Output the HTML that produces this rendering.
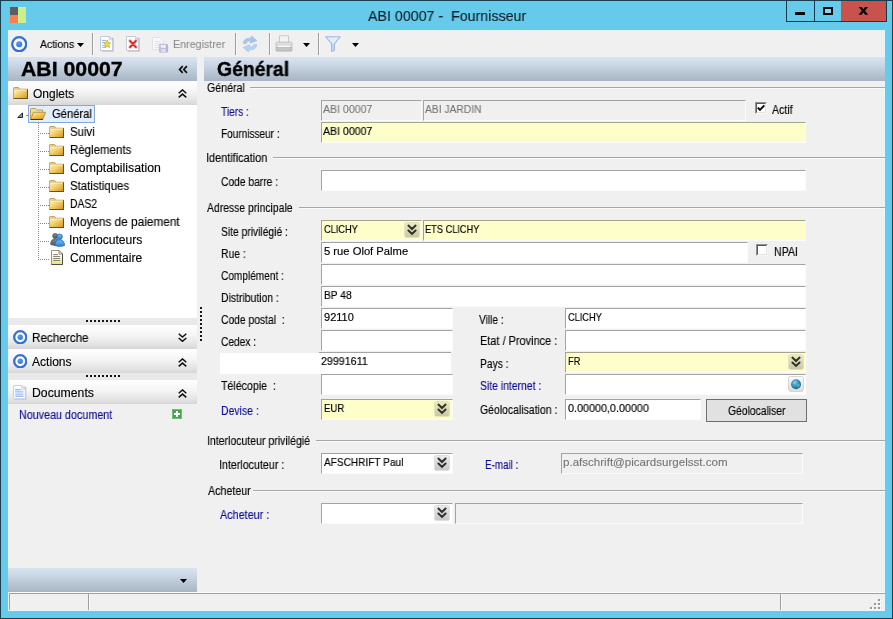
<!DOCTYPE html>
<html><head><meta charset="utf-8"><title>ABI 00007 - Fournisseur</title>
<style>
html,body{margin:0;padding:0;}
body{width:893px;height:619px;overflow:hidden;position:relative;background:#66caea;font-family:"Liberation Sans", sans-serif;}
#w div, #w svg, #w span{position:absolute;}
#w div{box-sizing:border-box;}
.t{white-space:pre;transform-origin:0 0;will-change:transform;}
.f{border-top:1px solid #a3a3a3;border-left:1px solid #a3a3a3;border-right:1px solid #fbfbfb;border-bottom:1px solid #fbfbfb;}
</style></head><body><div id="w">
<div style="left:0px;top:0px;width:893px;height:619px;background:#66caea;border:1px solid #1a3f50;"></div>
<div style="left:8px;top:31px;width:877px;height:580px;background:#f0f0f0;"></div>
<div style="left:884px;top:31px;width:1px;height:580px;background:#e6f6fb;"></div>
<div style="left:8px;top:610px;width:877px;height:1px;background:#e6f6fb;"></div>
<div style="left:8px;top:30px;width:877px;height:1px;background:#dff2f9;"></div>
<svg style="left:10px;top:7px" width="16" height="16" viewBox="0 0 16 16"><rect x="0" y="0" width="8" height="8" fill="#5f5d60"/><rect x="0" y="8" width="8" height="8" fill="#f5824e"/><rect x="8" y="0" width="8" height="16" fill="#c9f08a"/></svg>
<div style="left:786px;top:1px;width:101px;height:21px;border:1px solid #173a4a;border-top:none;background:#66caea;"></div>
<div style="left:814px;top:1px;width:1px;height:20px;background:#173a4a;"></div>
<div style="left:841px;top:1px;width:45px;height:20px;background:#c9524d;"></div>
<div style="left:795px;top:12px;width:10px;height:3px;background:#0a0a0a;"></div>
<div style="left:823px;top:7px;width:10px;height:8px;border:2px solid #0a0a0a;background:#8ed4ee;"></div>
<svg style="left:858px;top:7px" width="11" height="8" viewBox="0 0 11 8"><path d="M0.6 0H3.9L5.4 2.2L6.9 0H10.2L7 3.8L10.4 7.7H7.1L5.4 5.4L3.7 7.7H0.4L3.8 3.8Z" fill="#0a0a0a"/></svg>
<svg style="left:10.8px;top:35.5px" width="16.4" height="16.4" viewBox="0 0 16.4 16.4"><defs><radialGradient id="rg35" cx="0.4" cy="0.35" r="0.7"><stop offset="0" stop-color="#5a9cf0"/><stop offset="1" stop-color="#2f74d4"/></radialGradient></defs><circle cx="8.2" cy="8.2" r="7.00" fill="#f6f9fe" stroke="#3770c6" stroke-width="2.3"/><circle cx="8.2" cy="8.2" r="3.00" fill="url(#rg35)"/></svg>
<svg style="left:77px;top:43.3px" width="7" height="4" viewBox="0 0 7 4"><path d="M0 0H7L3.5 4Z" fill="#000"/></svg>
<div style="left:92px;top:33px;width:1px;height:22px;background:#9d9d9d;"></div>
<div style="left:93px;top:33px;width:1px;height:22px;background:#fafafa;"></div>
<div style="left:235px;top:33px;width:1px;height:22px;background:#9d9d9d;"></div>
<div style="left:236px;top:33px;width:1px;height:22px;background:#fafafa;"></div>
<div style="left:269px;top:33px;width:1px;height:22px;background:#9d9d9d;"></div>
<div style="left:270px;top:33px;width:1px;height:22px;background:#fafafa;"></div>
<div style="left:318px;top:33px;width:1px;height:22px;background:#9d9d9d;"></div>
<div style="left:319px;top:33px;width:1px;height:22px;background:#fafafa;"></div>
<svg style="left:100px;top:36px" width="14" height="16" viewBox="0 0 14 16"><path d="M2 2.2H13.6V15.6H2Z" fill="#7f8aa0" opacity="0.55"/><path d="M1.6 1.8H13V15H1.6Z" fill="#8d98ad" opacity="0.35"/><path d="M0.5 0.5H9.2L12.5 3.8V14.5H0.5Z" fill="#ffffff" stroke="#c3cbd9" stroke-width="1"/><path d="M9.2 0.5V3.8H12.5Z" fill="#e9edf4" stroke="#c3cbd9" stroke-width="0.8"/><path d="M2 4.5H6M2 6.6H5M2 9.2H5M2 11.3H6" stroke="#9fb4e0" stroke-width="1"/><path d="M7.2 3.9L8.3 6.6L10.7 6.9L8.9 8.7L9.4 11.6L7.2 10.2L5 11.6L5.5 8.7L3.7 6.9L6.1 6.6Z" fill="#ebe22c" stroke="#b4ad3c" stroke-width="0.7" stroke-linejoin="round"/></svg>
<svg style="left:126px;top:36px" width="14" height="16" viewBox="0 0 14 16"><path d="M2 2.2H13.6V15.6H2Z" fill="#7f8aa0" opacity="0.55"/><path d="M1.6 1.8H13V15H1.6Z" fill="#8d98ad" opacity="0.35"/><path d="M0.5 0.5H9.2L12.5 3.8V14.5H0.5Z" fill="#ffffff" stroke="#c3cbd9" stroke-width="1"/><path d="M9.2 0.5V3.8H12.5Z" fill="#e9edf4" stroke="#c3cbd9" stroke-width="0.8"/><path d="M3.9 4.8L10 11.2M10 4.8L3.9 11.2" stroke="#f4b0ac" stroke-width="3.2" stroke-linecap="round"/><path d="M4 4.9L9.9 11.1M9.9 4.9L4 11.1" stroke="#de2421" stroke-width="1.6" stroke-linecap="round"/></svg>
<svg style="left:152px;top:36px" width="17" height="17" viewBox="0 0 17 17"><path d="M0.5 1.5H8L11 4.5V13.5H0.5Z" fill="#f8f9fc" stroke="#dfe2ec"/><path d="M2.5 5.5H9M2.5 7.5H9M2.5 9.5H7M2.5 11.5H7" stroke="#dde2f0"/><rect x="7.3" y="8.3" width="8.4" height="8" rx="0.8" fill="#bfc0dc" stroke="#b4b5d4" stroke-width="0.6"/><rect x="8.8" y="9" width="5" height="2.8" fill="#eeeef7"/><rect x="9.2" y="13.2" width="4.6" height="3" fill="#dcdcee"/><path d="M15 9V16" stroke="#a7a8cc" stroke-width="1"/></svg>
<svg style="left:241px;top:35px" width="18" height="18" viewBox="0 0 18 18"><path d="M2.2 8.2C2.6 4.6 6.2 2.6 9.6 3.4L10.6 1L15.8 5.6L9 8.2L9.6 5.9C7.6 5.6 5.8 6.6 5.2 8.6Z" fill="#a9c6e8" stroke="#93b5de" stroke-width="0.6"/><path d="M15.8 9.8C15.4 13.4 11.8 15.4 8.4 14.6L7.4 17L2.2 12.4L9 9.8L8.4 12.1C10.4 12.4 12.2 11.4 12.8 9.4Z" fill="#b9d2ee" stroke="#9dbce2" stroke-width="0.6"/></svg>
<svg style="left:275px;top:35px" width="18" height="18" viewBox="0 0 18 18"><path d="M4.5 0.8H13.5V8H4.5Z" fill="#f4f4f4" stroke="#c9c9c9"/><path d="M1 8.5Q1 7 2.5 7H15.5Q17 7 17 8.5V13H1Z" fill="#dcdcdc" stroke="#bdbdbd" stroke-width="0.8"/><rect x="1" y="12.5" width="16" height="3.6" rx="1" fill="#c6c6c6" stroke="#adadad" stroke-width="0.8"/><rect x="3" y="10.6" width="12" height="1.6" fill="#f6f6f6"/></svg>
<svg style="left:303px;top:43px" width="7" height="4" viewBox="0 0 7 4"><path d="M0 0H7L3.5 4Z" fill="#000"/></svg>
<svg style="left:325px;top:36px" width="16" height="16" viewBox="0 0 16 16"><path d="M0.6 0.8H15.4L9.4 8V14.6L6.6 15.4V8Z" fill="#c4d8f0" stroke="#9ab6dc" stroke-width="1" stroke-linejoin="round"/><path d="M2.4 1.6H13.6L8.6 7.4H7.4Z" fill="#e3edf9"/></svg>
<svg style="left:352px;top:43px" width="7" height="4" viewBox="0 0 7 4"><path d="M0 0H7L3.5 4Z" fill="#000"/></svg>
<div style="left:8px;top:57px;width:189px;height:24px;background:linear-gradient(#d8e4f0 0%,#ccd8e6 30%,#b6c3d1 70%,#a8b5c4 100%);"></div>
<div style="left:204px;top:57px;width:681px;height:24px;background:linear-gradient(#d8e4f0 0%,#ccd8e6 30%,#b6c3d1 70%,#a8b5c4 100%);"></div>
<svg style="left:178px;top:65px" width="10" height="9" viewBox="0 0 10 9"><path d="M4.7 1.2L1.6 4.5L4.7 7.8M8.9 1.2L5.8 4.5L8.9 7.8" stroke="#0c0c0c" stroke-width="1.7" fill="none"/></svg>
<div style="left:8px;top:81px;width:189px;height:24px;background:linear-gradient(#ffffff 0%,#f6f6f6 40%,#e4e4e4 80%,#d6d6d6 100%);"></div>
<svg style="left:178px;top:89px" width="9" height="9" viewBox="0 0 9 9"><path d="M0.7 4.2L4.5 0.9L8.3 4.2M0.7 8.4L4.5 5.1L8.3 8.4" stroke="#111" stroke-width="1.5" fill="none"/></svg>
<div style="left:8px;top:105px;width:189px;height:213px;background:#fff;"></div>
<div style="left:8px;top:318px;width:189px;height:7px;background:#e9e9e9;"></div>
<div style="left:8px;top:373px;width:189px;height:7px;background:#e9e9e9;"></div>
<div style="left:86px;top:320px;width:2px;height:2px;background:#161616;"></div>
<div style="left:90px;top:320px;width:2px;height:2px;background:#161616;"></div>
<div style="left:94px;top:320px;width:2px;height:2px;background:#161616;"></div>
<div style="left:98px;top:320px;width:2px;height:2px;background:#161616;"></div>
<div style="left:102px;top:320px;width:2px;height:2px;background:#161616;"></div>
<div style="left:106px;top:320px;width:2px;height:2px;background:#161616;"></div>
<div style="left:110px;top:320px;width:2px;height:2px;background:#161616;"></div>
<div style="left:114px;top:320px;width:2px;height:2px;background:#161616;"></div>
<div style="left:118px;top:320px;width:2px;height:2px;background:#161616;"></div>
<div style="left:86px;top:375px;width:2px;height:2px;background:#161616;"></div>
<div style="left:90px;top:375px;width:2px;height:2px;background:#161616;"></div>
<div style="left:94px;top:375px;width:2px;height:2px;background:#161616;"></div>
<div style="left:98px;top:375px;width:2px;height:2px;background:#161616;"></div>
<div style="left:102px;top:375px;width:2px;height:2px;background:#161616;"></div>
<div style="left:106px;top:375px;width:2px;height:2px;background:#161616;"></div>
<div style="left:110px;top:375px;width:2px;height:2px;background:#161616;"></div>
<div style="left:114px;top:375px;width:2px;height:2px;background:#161616;"></div>
<div style="left:118px;top:375px;width:2px;height:2px;background:#161616;"></div>
<div style="left:200px;top:307px;width:2px;height:2px;background:#161616;"></div>
<div style="left:200px;top:311px;width:2px;height:2px;background:#161616;"></div>
<div style="left:200px;top:315px;width:2px;height:2px;background:#161616;"></div>
<div style="left:200px;top:319px;width:2px;height:2px;background:#161616;"></div>
<div style="left:200px;top:323px;width:2px;height:2px;background:#161616;"></div>
<div style="left:200px;top:327px;width:2px;height:2px;background:#161616;"></div>
<div style="left:200px;top:331px;width:2px;height:2px;background:#161616;"></div>
<div style="left:200px;top:335px;width:2px;height:2px;background:#161616;"></div>
<div style="left:200px;top:339px;width:2px;height:2px;background:#161616;"></div>
<div style="left:8px;top:325px;width:189px;height:24px;background:linear-gradient(#ffffff 0%,#f6f6f6 40%,#e4e4e4 80%,#d6d6d6 100%);"></div>
<div style="left:8px;top:349px;width:189px;height:24px;background:linear-gradient(#ffffff 0%,#f6f6f6 40%,#e4e4e4 80%,#d6d6d6 100%);"></div>
<div style="left:8px;top:380px;width:189px;height:24px;background:linear-gradient(#ffffff 0%,#f6f6f6 40%,#e4e4e4 80%,#d6d6d6 100%);"></div>
<svg style="left:178px;top:333px" width="9" height="9" viewBox="0 0 9 9"><path d="M0.7 0.8L4.5 4.1L8.3 0.8M0.7 5L4.5 8.3L8.3 5" stroke="#111" stroke-width="1.5" fill="none"/></svg>
<svg style="left:178px;top:358px" width="9" height="9" viewBox="0 0 9 9"><path d="M0.7 4.2L4.5 0.9L8.3 4.2M0.7 8.4L4.5 5.1L8.3 8.4" stroke="#111" stroke-width="1.5" fill="none"/></svg>
<svg style="left:178px;top:389px" width="9" height="9" viewBox="0 0 9 9"><path d="M0.7 4.2L4.5 0.9L8.3 4.2M0.7 8.4L4.5 5.1L8.3 8.4" stroke="#111" stroke-width="1.5" fill="none"/></svg>
<svg style="left:12.7px;top:329.5px" width="14.5" height="14.5" viewBox="0 0 14.5 14.5"><defs><radialGradient id="rg329" cx="0.4" cy="0.35" r="0.7"><stop offset="0" stop-color="#5a9cf0"/><stop offset="1" stop-color="#2f74d4"/></radialGradient></defs><circle cx="7.25" cy="7.25" r="6.05" fill="#f6f9fe" stroke="#3770c6" stroke-width="2.3"/><circle cx="7.25" cy="7.25" r="2.65" fill="url(#rg329)"/></svg>
<svg style="left:12.7px;top:353.5px" width="14.5" height="14.5" viewBox="0 0 14.5 14.5"><defs><radialGradient id="rg353" cx="0.4" cy="0.35" r="0.7"><stop offset="0" stop-color="#5a9cf0"/><stop offset="1" stop-color="#2f74d4"/></radialGradient></defs><circle cx="7.25" cy="7.25" r="6.05" fill="#f6f9fe" stroke="#3770c6" stroke-width="2.3"/><circle cx="7.25" cy="7.25" r="2.65" fill="url(#rg353)"/></svg>
<svg style="left:13px;top:86.5px" width="15" height="12" viewBox="0 0 15 12"><defs><linearGradient id="fgh" x1="0" y1="0" x2="1" y2="1"><stop offset="0" stop-color="#fff4c6"/><stop offset="0.45" stop-color="#f4d06c"/><stop offset="1" stop-color="#d39326"/></linearGradient></defs><path d="M0.5 2.2V1.3Q0.5 0.5 1.3 0.5H5.2Q5.9 0.5 6.3 1.2L6.9 2.2" fill="#f4dfa0" stroke="#b79a58" stroke-width="0.9"/><rect x="0.5" y="2.2" width="14" height="9.3" fill="url(#fgh)"/><path d="M0.5 11.5V2.2H14.5" fill="none" stroke="#c5a556" stroke-width="0.9"/><path d="M14.5 2.2V11.5H0.5" fill="none" stroke="#6f5215" stroke-width="1.1"/><path d="M1.3 3.1H13.6" stroke="#fffbe6" stroke-width="0.8" opacity="0.9"/></svg>
<div style="left:38px;top:123px;width:1px;height:137px;background:repeating-linear-gradient(to bottom,#858585 0 1px,transparent 1px 2px);"></div>
<div style="left:40px;top:133px;width:9px;height:1px;background:repeating-linear-gradient(to right,#858585 0 1px,transparent 1px 2px);"></div>
<div style="left:40px;top:151px;width:9px;height:1px;background:repeating-linear-gradient(to right,#858585 0 1px,transparent 1px 2px);"></div>
<div style="left:40px;top:169px;width:9px;height:1px;background:repeating-linear-gradient(to right,#858585 0 1px,transparent 1px 2px);"></div>
<div style="left:40px;top:187px;width:9px;height:1px;background:repeating-linear-gradient(to right,#858585 0 1px,transparent 1px 2px);"></div>
<div style="left:40px;top:205px;width:9px;height:1px;background:repeating-linear-gradient(to right,#858585 0 1px,transparent 1px 2px);"></div>
<div style="left:40px;top:223px;width:9px;height:1px;background:repeating-linear-gradient(to right,#858585 0 1px,transparent 1px 2px);"></div>
<div style="left:40px;top:241px;width:9px;height:1px;background:repeating-linear-gradient(to right,#858585 0 1px,transparent 1px 2px);"></div>
<div style="left:40px;top:259px;width:9px;height:1px;background:repeating-linear-gradient(to right,#858585 0 1px,transparent 1px 2px);"></div>
<div style="left:26px;top:115px;width:2px;height:1px;background:#858585;"></div>
<div style="left:28px;top:105px;width:67px;height:18px;background:#e3eefb;border:1px solid #82a9da;"></div>
<svg style="left:17px;top:112px" width="6" height="6" viewBox="0 0 6 6"><path d="M5.5 0.8V5.5H0.8Z" fill="#9a9a9a" stroke="#262626" stroke-width="1"/></svg>
<svg style="left:30px;top:108px" width="16" height="12" viewBox="0 0 16 12"><defs><linearGradient id="fo" x1="0" y1="0" x2="0.7" y2="1"><stop offset="0" stop-color="#fff2bd"/><stop offset="0.5" stop-color="#f4c856"/><stop offset="1" stop-color="#e2a21f"/></linearGradient></defs><path d="M0.5 11.3V1.3Q0.5 0.5 1.3 0.5H5Q5.8 0.5 6.2 1.2L6.8 2H12.6V4.5" fill="#f3dd98" stroke="#b1975a" stroke-width="0.9"/><path d="M0.6 11.5L3.4 4.3H15.6L12.8 11.5Z" fill="url(#fo)" stroke="#b0873a" stroke-width="0.8" stroke-linejoin="round"/><path d="M0.6 11.5H12.8" stroke="#4a3208" stroke-width="1.1"/></svg>
<svg style="left:49px;top:126px" width="15" height="12" viewBox="0 0 15 12"><defs><linearGradient id="fg0" x1="0" y1="0" x2="1" y2="1"><stop offset="0" stop-color="#fff4c6"/><stop offset="0.45" stop-color="#f4d06c"/><stop offset="1" stop-color="#d39326"/></linearGradient></defs><path d="M0.5 2.2V1.3Q0.5 0.5 1.3 0.5H5.2Q5.9 0.5 6.3 1.2L6.9 2.2" fill="#f4dfa0" stroke="#b79a58" stroke-width="0.9"/><rect x="0.5" y="2.2" width="14" height="9.3" fill="url(#fg0)"/><path d="M0.5 11.5V2.2H14.5" fill="none" stroke="#c5a556" stroke-width="0.9"/><path d="M14.5 2.2V11.5H0.5" fill="none" stroke="#6f5215" stroke-width="1.1"/><path d="M1.3 3.1H13.6" stroke="#fffbe6" stroke-width="0.8" opacity="0.9"/></svg>
<svg style="left:49px;top:144px" width="15" height="12" viewBox="0 0 15 12"><defs><linearGradient id="fg1" x1="0" y1="0" x2="1" y2="1"><stop offset="0" stop-color="#fff4c6"/><stop offset="0.45" stop-color="#f4d06c"/><stop offset="1" stop-color="#d39326"/></linearGradient></defs><path d="M0.5 2.2V1.3Q0.5 0.5 1.3 0.5H5.2Q5.9 0.5 6.3 1.2L6.9 2.2" fill="#f4dfa0" stroke="#b79a58" stroke-width="0.9"/><rect x="0.5" y="2.2" width="14" height="9.3" fill="url(#fg1)"/><path d="M0.5 11.5V2.2H14.5" fill="none" stroke="#c5a556" stroke-width="0.9"/><path d="M14.5 2.2V11.5H0.5" fill="none" stroke="#6f5215" stroke-width="1.1"/><path d="M1.3 3.1H13.6" stroke="#fffbe6" stroke-width="0.8" opacity="0.9"/></svg>
<svg style="left:49px;top:162px" width="15" height="12" viewBox="0 0 15 12"><defs><linearGradient id="fg2" x1="0" y1="0" x2="1" y2="1"><stop offset="0" stop-color="#fff4c6"/><stop offset="0.45" stop-color="#f4d06c"/><stop offset="1" stop-color="#d39326"/></linearGradient></defs><path d="M0.5 2.2V1.3Q0.5 0.5 1.3 0.5H5.2Q5.9 0.5 6.3 1.2L6.9 2.2" fill="#f4dfa0" stroke="#b79a58" stroke-width="0.9"/><rect x="0.5" y="2.2" width="14" height="9.3" fill="url(#fg2)"/><path d="M0.5 11.5V2.2H14.5" fill="none" stroke="#c5a556" stroke-width="0.9"/><path d="M14.5 2.2V11.5H0.5" fill="none" stroke="#6f5215" stroke-width="1.1"/><path d="M1.3 3.1H13.6" stroke="#fffbe6" stroke-width="0.8" opacity="0.9"/></svg>
<svg style="left:49px;top:180px" width="15" height="12" viewBox="0 0 15 12"><defs><linearGradient id="fg3" x1="0" y1="0" x2="1" y2="1"><stop offset="0" stop-color="#fff4c6"/><stop offset="0.45" stop-color="#f4d06c"/><stop offset="1" stop-color="#d39326"/></linearGradient></defs><path d="M0.5 2.2V1.3Q0.5 0.5 1.3 0.5H5.2Q5.9 0.5 6.3 1.2L6.9 2.2" fill="#f4dfa0" stroke="#b79a58" stroke-width="0.9"/><rect x="0.5" y="2.2" width="14" height="9.3" fill="url(#fg3)"/><path d="M0.5 11.5V2.2H14.5" fill="none" stroke="#c5a556" stroke-width="0.9"/><path d="M14.5 2.2V11.5H0.5" fill="none" stroke="#6f5215" stroke-width="1.1"/><path d="M1.3 3.1H13.6" stroke="#fffbe6" stroke-width="0.8" opacity="0.9"/></svg>
<svg style="left:49px;top:198px" width="15" height="12" viewBox="0 0 15 12"><defs><linearGradient id="fg4" x1="0" y1="0" x2="1" y2="1"><stop offset="0" stop-color="#fff4c6"/><stop offset="0.45" stop-color="#f4d06c"/><stop offset="1" stop-color="#d39326"/></linearGradient></defs><path d="M0.5 2.2V1.3Q0.5 0.5 1.3 0.5H5.2Q5.9 0.5 6.3 1.2L6.9 2.2" fill="#f4dfa0" stroke="#b79a58" stroke-width="0.9"/><rect x="0.5" y="2.2" width="14" height="9.3" fill="url(#fg4)"/><path d="M0.5 11.5V2.2H14.5" fill="none" stroke="#c5a556" stroke-width="0.9"/><path d="M14.5 2.2V11.5H0.5" fill="none" stroke="#6f5215" stroke-width="1.1"/><path d="M1.3 3.1H13.6" stroke="#fffbe6" stroke-width="0.8" opacity="0.9"/></svg>
<svg style="left:49px;top:216px" width="15" height="12" viewBox="0 0 15 12"><defs><linearGradient id="fg5" x1="0" y1="0" x2="1" y2="1"><stop offset="0" stop-color="#fff4c6"/><stop offset="0.45" stop-color="#f4d06c"/><stop offset="1" stop-color="#d39326"/></linearGradient></defs><path d="M0.5 2.2V1.3Q0.5 0.5 1.3 0.5H5.2Q5.9 0.5 6.3 1.2L6.9 2.2" fill="#f4dfa0" stroke="#b79a58" stroke-width="0.9"/><rect x="0.5" y="2.2" width="14" height="9.3" fill="url(#fg5)"/><path d="M0.5 11.5V2.2H14.5" fill="none" stroke="#c5a556" stroke-width="0.9"/><path d="M14.5 2.2V11.5H0.5" fill="none" stroke="#6f5215" stroke-width="1.1"/><path d="M1.3 3.1H13.6" stroke="#fffbe6" stroke-width="0.8" opacity="0.9"/></svg>
<svg style="left:49.5px;top:233px" width="15" height="14" viewBox="0 0 15 14"><defs><linearGradient id="pb" x1="0" y1="0" x2="0" y2="1"><stop offset="0" stop-color="#6cbcf2"/><stop offset="1" stop-color="#2c86d6"/></linearGradient><linearGradient id="pg" x1="0" y1="0" x2="0" y2="1"><stop offset="0" stop-color="#7c8a94"/><stop offset="1" stop-color="#525f69"/></linearGradient></defs><circle cx="5.2" cy="2.9" r="2.5" fill="url(#pg)" stroke="#3a4750" stroke-width="0.7"/><path d="M0.7 11.6C0.5 8 2.4 5.7 5.2 5.7C8 5.7 9.6 8 9.6 11.6Q5.2 13.2 0.7 11.6Z" fill="url(#pg)" stroke="#3a4750" stroke-width="0.7"/><circle cx="9.7" cy="3.7" r="2.7" fill="url(#pb)" stroke="#1f62a6" stroke-width="0.7"/><path d="M4.9 12.6C4.7 8.8 6.7 6.7 9.7 6.7C12.7 6.7 14.6 8.8 14.5 12.6Q9.7 14.4 4.9 12.6Z" fill="url(#pb)" stroke="#1f62a6" stroke-width="0.7"/></svg>
<svg style="left:51px;top:250px" width="12" height="15" viewBox="0 0 12 15"><defs><linearGradient id="ng" x1="0" y1="0" x2="0" y2="1"><stop offset="0" stop-color="#ffffff"/><stop offset="0.45" stop-color="#fffbe0"/><stop offset="1" stop-color="#f3dc6a"/></linearGradient></defs><path d="M0.5 0.5H8L11.5 4V14.5H0.5Z" fill="url(#ng)" stroke="#8b8b78" stroke-width="0.9"/><path d="M11.5 4V14.5H0.5" fill="none" stroke="#4c4c44" stroke-width="1"/><path d="M8 0.5V4H11.5Z" fill="#fff" stroke="#6e6e64" stroke-width="0.8"/><path d="M2.2 4.6H7M2.2 6.5H9.2M2.2 8.5H9.2M2.2 10.5H9.2" stroke="#85857a" stroke-width="1"/></svg>
<svg style="left:13px;top:384.5px" width="14" height="15" viewBox="0 0 14 15"><path d="M1.6 1.6H13.4V14.6H1.6Z" fill="#8e97a8" opacity="0.45"/><path d="M0.5 0.5H8.6L12.3 4.2V13.8H0.5Z" fill="#fdfeff" stroke="#c5cddc" stroke-width="0.9"/><path d="M8.6 0.5V4.2H12.3Z" fill="#eef2f9" stroke="#c5cddc" stroke-width="0.8"/><path d="M2.2 4.6H7.5M2.2 6.3H10.4M2.2 8H10.4M2.2 9.7H10.4M2.2 11.4H10.4" stroke="#9fbaf0" stroke-width="1.1"/></svg>
<svg style="left:172px;top:409px" width="10" height="10" viewBox="0 0 10 10"><rect x="0" y="0" width="10" height="10" rx="1" fill="#4aa54a"/><rect x="0.5" y="0.5" width="9" height="9" rx="1" fill="none" stroke="#7cc47c" stroke-width="0.8"/><path d="M5 2V8M2 5H8" stroke="#fff" stroke-width="2"/></svg>
<div style="left:8px;top:568px;width:189px;height:24px;background:linear-gradient(#d8e4f0 0%,#ccd8e6 30%,#b6c3d1 70%,#a8b5c4 100%);"></div>
<svg style="left:180px;top:578.7px" width="7" height="4" viewBox="0 0 7 4"><path d="M0 0H7L3.5 4Z" fill="#000"/></svg>
<div style="left:8px;top:592px;width:877px;height:1px;background:#fbfbfb;"></div>
<div style="left:9px;top:593px;width:876px;height:1px;background:#a0a0a0;"></div>
<div style="left:9px;top:593px;width:1px;height:17px;background:#a0a0a0;"></div>
<div style="left:88px;top:593px;width:1px;height:17px;background:#a0a0a0;"></div>
<div style="left:89px;top:594px;width:1px;height:16px;background:#fbfbfb;"></div>
<div style="left:780px;top:593px;width:1px;height:17px;background:#a0a0a0;"></div>
<div style="left:781px;top:594px;width:1px;height:16px;background:#fbfbfb;"></div>
<div style="left:879px;top:600px;width:2px;height:2px;background:#fdfdfd;"></div>
<div style="left:875px;top:604px;width:2px;height:2px;background:#fdfdfd;"></div>
<div style="left:879px;top:604px;width:2px;height:2px;background:#fdfdfd;"></div>
<div style="left:871px;top:608px;width:2px;height:2px;background:#fdfdfd;"></div>
<div style="left:875px;top:608px;width:2px;height:2px;background:#fdfdfd;"></div>
<div style="left:879px;top:608px;width:2px;height:2px;background:#fdfdfd;"></div>
<div style="left:878px;top:599px;width:2px;height:2px;background:#979797;"></div>
<div style="left:874px;top:603px;width:2px;height:2px;background:#979797;"></div>
<div style="left:878px;top:603px;width:2px;height:2px;background:#979797;"></div>
<div style="left:870px;top:607px;width:2px;height:2px;background:#979797;"></div>
<div style="left:874px;top:607px;width:2px;height:2px;background:#979797;"></div>
<div style="left:878px;top:607px;width:2px;height:2px;background:#979797;"></div>
<div style="left:250px;top:87px;width:635px;height:1px;background:#a6a6a6;"></div>
<div style="left:250px;top:88px;width:635px;height:1px;background:#fafafa;"></div>
<div style="left:273px;top:157px;width:612px;height:1px;background:#a6a6a6;"></div>
<div style="left:273px;top:158px;width:612px;height:1px;background:#fafafa;"></div>
<div style="left:299px;top:207px;width:586px;height:1px;background:#a6a6a6;"></div>
<div style="left:299px;top:208px;width:586px;height:1px;background:#fafafa;"></div>
<div style="left:316px;top:440px;width:569px;height:1px;background:#a6a6a6;"></div>
<div style="left:316px;top:441px;width:569px;height:1px;background:#fafafa;"></div>
<div style="left:253px;top:490px;width:632px;height:1px;background:#a6a6a6;"></div>
<div style="left:253px;top:491px;width:632px;height:1px;background:#fafafa;"></div>
<div class="f" style="left:321px;top:100px;width:101px;height:21px;background:#f0f0f0;"></div>
<div class="f" style="left:423px;top:100px;width:323px;height:21px;background:#f0f0f0;"></div>
<div style="left:755px;top:102px;width:12px;height:12px;background:#fff;border-top:1px solid #8f8f8f;border-left:1px solid #8f8f8f;border-right:1px solid #f7f7f7;border-bottom:1px solid #f7f7f7;"></div>
<div style="left:756px;top:103px;width:10px;height:10px;border-top:1px solid #5a5a5a;border-left:1px solid #5a5a5a;border-right:1px solid #e3e3e3;border-bottom:1px solid #e3e3e3;background:#fff;"></div>
<svg style="left:757px;top:104px" width="8" height="8" viewBox="0 0 8 8"><path d="M0.8 3.6L3 5.9L7.3 1.3" stroke="#000" stroke-width="1.9" fill="none"/></svg>
<div class="f" style="left:321px;top:122px;width:485px;height:21px;background:#fefecb;border-top-color:#a4a48f;border-left-color:#a4a48f;"></div>
<div class="f" style="left:321px;top:170px;width:485px;height:21px;background:#fff;"></div>
<div class="f" style="left:321px;top:220px;width:101px;height:21px;background:#fefecb;border-top-color:#a4a48f;border-left-color:#a4a48f;"></div>
<div class="f" style="left:423px;top:220px;width:383px;height:21px;background:#fefecb;border-top-color:#a4a48f;border-left-color:#a4a48f;"></div>
<svg style="left:404px;top:222px" width="16" height="16" viewBox="0 0 16 16"><defs><linearGradient id="dd1" x1="0" y1="0" x2="0" y2="1"><stop offset="0" stop-color="#ebebcb"/><stop offset="1" stop-color="#c6c6ab"/></linearGradient></defs><rect x="0.5" y="0.5" width="15" height="15" rx="2" fill="url(#dd1)" stroke="#e4e4b6" stroke-width="1"/><path d="M4.4 3.6L8 7L11.6 3.6M4.4 8.5L8 11.9L11.6 8.5" stroke="#34341e" stroke-width="2" fill="none" stroke-linecap="round"/></svg>
<div class="f" style="left:321px;top:242px;width:427px;height:21px;background:#fff;"></div>
<div style="left:756px;top:244px;width:12px;height:12px;background:#fff;border-top:1px solid #8f8f8f;border-left:1px solid #8f8f8f;border-right:1px solid #f7f7f7;border-bottom:1px solid #f7f7f7;"></div>
<div style="left:757px;top:245px;width:10px;height:10px;border-top:1px solid #5a5a5a;border-left:1px solid #5a5a5a;border-right:1px solid #e3e3e3;border-bottom:1px solid #e3e3e3;background:#fff;"></div>
<div class="f" style="left:321px;top:264px;width:485px;height:21px;background:#fff;"></div>
<div class="f" style="left:321px;top:286px;width:485px;height:21px;background:#fff;"></div>
<div class="f" style="left:321px;top:308px;width:132px;height:21px;background:#fff;"></div>
<div class="f" style="left:565px;top:308px;width:241px;height:21px;background:#fff;"></div>
<div class="f" style="left:321px;top:330px;width:132px;height:21px;background:#fff;"></div>
<div class="f" style="left:565px;top:330px;width:241px;height:21px;background:#fff;"></div>
<div style="left:220px;top:353px;width:231px;height:21px;background:#fff;"></div>
<div style="left:319px;top:352px;width:132px;height:1px;background:#a3a3a3;"></div>
<div class="f" style="left:565px;top:352px;width:241px;height:21px;background:#fefecb;border-top-color:#a4a48f;border-left-color:#a4a48f;"></div>
<svg style="left:788px;top:354px" width="16" height="16" viewBox="0 0 16 16"><defs><linearGradient id="dd2" x1="0" y1="0" x2="0" y2="1"><stop offset="0" stop-color="#ebebcb"/><stop offset="1" stop-color="#c6c6ab"/></linearGradient></defs><rect x="0.5" y="0.5" width="15" height="15" rx="2" fill="url(#dd2)" stroke="#e4e4b6" stroke-width="1"/><path d="M4.4 3.6L8 7L11.6 3.6M4.4 8.5L8 11.9L11.6 8.5" stroke="#34341e" stroke-width="2" fill="none" stroke-linecap="round"/></svg>
<div class="f" style="left:321px;top:374px;width:132px;height:21px;background:#fff;"></div>
<div class="f" style="left:565px;top:374px;width:241px;height:21px;background:#fff;"></div>
<svg style="left:788px;top:376px" width="16" height="16" viewBox="0 0 16 16"><defs><radialGradient id="gl" cx="0.4" cy="0.35" r="0.75"><stop offset="0" stop-color="#7fc6de"/><stop offset="0.55" stop-color="#2e8ab8"/><stop offset="1" stop-color="#1a577f"/></radialGradient><linearGradient id="gb" x1="0" y1="0" x2="0" y2="1"><stop offset="0" stop-color="#fbfbfb"/><stop offset="1" stop-color="#dcdcdc"/></linearGradient></defs><rect x="0.5" y="0.5" width="15" height="15" rx="2" fill="url(#gb)" stroke="#d6d6d6"/><circle cx="8" cy="8.2" r="5" fill="url(#gl)"/><path d="M5 6.6Q6.4 4.4 8.6 4.6Q8.4 6.8 6.6 8.2Q5.4 8 5 6.6ZM9.4 8.4Q11 7.6 12 8.8Q11.4 11 9.6 11.6Q9 10 9.4 8.4Z" fill="#8fd6c8" opacity="0.55"/></svg>
<div class="f" style="left:321px;top:399px;width:132px;height:21px;background:#fefecb;border-top-color:#a4a48f;border-left-color:#a4a48f;"></div>
<svg style="left:434px;top:401px" width="16" height="16" viewBox="0 0 16 16"><defs><linearGradient id="dd3" x1="0" y1="0" x2="0" y2="1"><stop offset="0" stop-color="#ebebcb"/><stop offset="1" stop-color="#c6c6ab"/></linearGradient></defs><rect x="0.5" y="0.5" width="15" height="15" rx="2" fill="url(#dd3)" stroke="#e4e4b6" stroke-width="1"/><path d="M4.4 3.6L8 7L11.6 3.6M4.4 8.5L8 11.9L11.6 8.5" stroke="#34341e" stroke-width="2" fill="none" stroke-linecap="round"/></svg>
<div class="f" style="left:565px;top:399px;width:136px;height:21px;background:#fff;"></div>
<div style="left:706px;top:399px;width:101px;height:23px;background:#e1e1e1;border:1px solid #6f6f6f;"></div>
<div class="f" style="left:321px;top:453px;width:132px;height:21px;background:#fff;"></div>
<svg style="left:434px;top:455px" width="16" height="16" viewBox="0 0 16 16"><defs><linearGradient id="dd4" x1="0" y1="0" x2="0" y2="1"><stop offset="0" stop-color="#ececec"/><stop offset="1" stop-color="#c6c6c6"/></linearGradient></defs><rect x="0.5" y="0.5" width="15" height="15" rx="2" fill="url(#dd4)" stroke="#dedede" stroke-width="1"/><path d="M4.4 3.6L8 7L11.6 3.6M4.4 8.5L8 11.9L11.6 8.5" stroke="#2e2e2a" stroke-width="2" fill="none" stroke-linecap="round"/></svg>
<div class="f" style="left:561px;top:453px;width:242px;height:21px;background:#f0f0f0;"></div>
<div class="f" style="left:321px;top:503px;width:132px;height:21px;background:#fff;"></div>
<svg style="left:434px;top:505px" width="16" height="16" viewBox="0 0 16 16"><defs><linearGradient id="dd5" x1="0" y1="0" x2="0" y2="1"><stop offset="0" stop-color="#ececec"/><stop offset="1" stop-color="#c6c6c6"/></linearGradient></defs><rect x="0.5" y="0.5" width="15" height="15" rx="2" fill="url(#dd5)" stroke="#dedede" stroke-width="1"/><path d="M4.4 3.6L8 7L11.6 3.6M4.4 8.5L8 11.9L11.6 8.5" stroke="#2e2e2a" stroke-width="2" fill="none" stroke-linecap="round"/></svg>
<div class="f" style="left:455px;top:503px;width:348px;height:21px;background:#f0f0f0;"></div>
<span class="t" style="left:367.70px;top:6px;font-size:15.5px;line-height:20px;color:#0b1d2a;transform:scaleX(0.9178);-webkit-text-stroke:0.1px;">ABI 00007 -  Fournisseur</span>
<span class="t" style="left:40.00px;top:36px;font-size:11.5px;line-height:16px;color:#000;transform:scaleX(0.9062);-webkit-text-stroke:0.16px;">Actions</span>
<span class="t" style="left:172.60px;top:36px;font-size:11.5px;line-height:16px;color:#8c8c8c;transform:scaleX(0.9289);-webkit-text-stroke:0.1px;">Enregistrer</span>
<span class="t" style="left:20.60px;top:57px;font-size:19.5px;line-height:24px;color:#000;transform:scaleX(1.0901);font-weight:bold;-webkit-text-stroke:0.35px;">ABI 00007</span>
<span class="t" style="left:217.40px;top:57px;font-size:19.5px;line-height:24px;color:#000;transform:scaleX(0.9930);font-weight:bold;-webkit-text-stroke:0.35px;">Général</span>
<span class="t" style="left:33.00px;top:86px;font-size:12px;line-height:16px;color:#000;transform:scaleX(0.9962);-webkit-text-stroke:0.14px;">Onglets</span>
<span class="t" style="left:32.40px;top:330px;font-size:12px;line-height:16px;color:#000;transform:scaleX(0.9750);-webkit-text-stroke:0.14px;">Recherche</span>
<span class="t" style="left:32.40px;top:354px;font-size:12px;line-height:16px;color:#000;transform:scaleX(1.0063);-webkit-text-stroke:0.14px;">Actions</span>
<span class="t" style="left:32.40px;top:385px;font-size:12px;line-height:16px;color:#000;transform:scaleX(1.0199);-webkit-text-stroke:0.14px;">Documents</span>
<span class="t" style="left:18.60px;top:407px;font-size:12px;line-height:16px;color:#0c0c94;transform:scaleX(0.8956);-webkit-text-stroke:0.14px;">Nouveau document</span>
<span class="t" style="left:51.70px;top:106px;font-size:12px;line-height:16px;color:#000;transform:scaleX(0.9351);-webkit-text-stroke:0.14px;">Général</span>
<span class="t" style="left:70.40px;top:124px;font-size:12px;line-height:16px;color:#000;transform:scaleX(0.9509);-webkit-text-stroke:0.14px;">Suivi</span>
<span class="t" style="left:70.40px;top:142px;font-size:12px;line-height:16px;color:#000;transform:scaleX(0.9573);-webkit-text-stroke:0.14px;">Règlements</span>
<span class="t" style="left:70.40px;top:160px;font-size:12px;line-height:16px;color:#000;transform:scaleX(1.0234);-webkit-text-stroke:0.14px;">Comptabilisation</span>
<span class="t" style="left:70.40px;top:178px;font-size:12px;line-height:16px;color:#000;transform:scaleX(0.9543);-webkit-text-stroke:0.14px;">Statistiques</span>
<span class="t" style="left:70.40px;top:196px;font-size:12px;line-height:16px;color:#000;transform:scaleX(0.8588);-webkit-text-stroke:0.14px;">DAS2</span>
<span class="t" style="left:70.40px;top:214px;font-size:12px;line-height:16px;color:#000;transform:scaleX(0.9843);-webkit-text-stroke:0.14px;">Moyens de paiement</span>
<span class="t" style="left:69.39px;top:232px;font-size:12px;line-height:16px;color:#000;transform:scaleX(1.0097);-webkit-text-stroke:0.14px;">Interlocuteurs</span>
<span class="t" style="left:70.40px;top:250px;font-size:12px;line-height:16px;color:#000;transform:scaleX(1.0007);-webkit-text-stroke:0.14px;">Commentaire</span>
<span class="t" style="left:207.40px;top:80px;font-size:12px;line-height:16px;color:#000;transform:scaleX(0.8876);-webkit-text-stroke:0.14px;">Général</span>
<span class="t" style="left:206.49px;top:150px;font-size:12px;line-height:16px;color:#000;transform:scaleX(0.9102);-webkit-text-stroke:0.14px;">Identification</span>
<span class="t" style="left:207.20px;top:200px;font-size:12px;line-height:16px;color:#000;transform:scaleX(0.8663);-webkit-text-stroke:0.14px;">Adresse principale</span>
<span class="t" style="left:206.72px;top:433px;font-size:12px;line-height:16px;color:#000;transform:scaleX(0.8773);-webkit-text-stroke:0.14px;">Interlocuteur privilégié</span>
<span class="t" style="left:207.60px;top:483px;font-size:12px;line-height:16px;color:#000;transform:scaleX(0.8911);-webkit-text-stroke:0.14px;">Acheteur</span>
<span class="t" style="left:220.80px;top:104px;font-size:12px;line-height:16px;color:#0c0c94;transform:scaleX(0.8478);-webkit-text-stroke:0.14px;">Tiers :</span>
<span class="t" style="left:220.70px;top:126px;font-size:12px;line-height:16px;color:#000;transform:scaleX(0.8365);-webkit-text-stroke:0.14px;">Fournisseur :</span>
<span class="t" style="left:220.70px;top:174px;font-size:12px;line-height:16px;color:#000;transform:scaleX(0.8558);-webkit-text-stroke:0.14px;">Code barre :</span>
<span class="t" style="left:220.70px;top:224px;font-size:12px;line-height:16px;color:#000;transform:scaleX(0.8571);-webkit-text-stroke:0.14px;">Site privilégié :</span>
<span class="t" style="left:220.70px;top:246px;font-size:12px;line-height:16px;color:#000;transform:scaleX(0.8678);-webkit-text-stroke:0.14px;">Rue :</span>
<span class="t" style="left:220.70px;top:268px;font-size:12px;line-height:16px;color:#000;transform:scaleX(0.8418);-webkit-text-stroke:0.14px;">Complément :</span>
<span class="t" style="left:220.70px;top:290px;font-size:12px;line-height:16px;color:#000;transform:scaleX(0.8680);-webkit-text-stroke:0.14px;">Distribution :</span>
<span class="t" style="left:220.70px;top:312px;font-size:12px;line-height:16px;color:#000;transform:scaleX(0.8588);-webkit-text-stroke:0.14px;">Code postal  :</span>
<span class="t" style="left:220.70px;top:334px;font-size:12px;line-height:16px;color:#000;transform:scaleX(0.8459);-webkit-text-stroke:0.14px;">Cedex :</span>
<span class="t" style="left:220.90px;top:378px;font-size:12px;line-height:16px;color:#000;transform:scaleX(0.8866);-webkit-text-stroke:0.14px;">Télécopie  :</span>
<span class="t" style="left:220.90px;top:403px;font-size:12px;line-height:16px;color:#0c0c94;transform:scaleX(0.8718);-webkit-text-stroke:0.14px;">Devise :</span>
<span class="t" style="left:218.61px;top:457px;font-size:12px;line-height:16px;color:#000;transform:scaleX(0.8898);-webkit-text-stroke:0.14px;">Interlocuteur :</span>
<span class="t" style="left:219.50px;top:507px;font-size:12px;line-height:16px;color:#0c0c94;transform:scaleX(0.9013);-webkit-text-stroke:0.14px;">Acheteur :</span>
<span class="t" style="left:479.20px;top:312px;font-size:12px;line-height:16px;color:#000;transform:scaleX(0.8474);-webkit-text-stroke:0.14px;">Ville :</span>
<span class="t" style="left:479.60px;top:333px;font-size:12px;line-height:16px;color:#000;transform:scaleX(0.9127);-webkit-text-stroke:0.14px;">Etat / Province :</span>
<span class="t" style="left:479.60px;top:356px;font-size:12px;line-height:16px;color:#000;transform:scaleX(0.8542);-webkit-text-stroke:0.14px;">Pays :</span>
<span class="t" style="left:479.60px;top:378px;font-size:12px;line-height:16px;color:#0c0c94;transform:scaleX(0.8668);-webkit-text-stroke:0.14px;">Site internet :</span>
<span class="t" style="left:479.60px;top:402px;font-size:12px;line-height:16px;color:#000;transform:scaleX(0.8712);-webkit-text-stroke:0.14px;">Géolocalisation :</span>
<span class="t" style="left:484.50px;top:457px;font-size:12px;line-height:16px;color:#0c0c94;transform:scaleX(0.8206);-webkit-text-stroke:0.14px;">E-mail :</span>
<span class="t" style="left:771.80px;top:102px;font-size:12px;line-height:16px;color:#000;transform:scaleX(0.8832);-webkit-text-stroke:0.14px;">Actif</span>
<span class="t" style="left:773.70px;top:244px;font-size:12px;line-height:16px;color:#000;transform:scaleX(0.8849);-webkit-text-stroke:0.14px;">NPAI</span>
<span class="t" style="left:728.30px;top:403px;font-size:12px;line-height:16px;color:#000;transform:scaleX(0.8621);-webkit-text-stroke:0.14px;">Géolocaliser</span>
<span class="t" style="left:323.40px;top:101px;font-size:11px;line-height:16px;color:#747474;transform:scaleX(0.9599);-webkit-text-stroke:0.1px;">ABI 00007</span>
<span class="t" style="left:425.40px;top:101px;font-size:11px;line-height:16px;color:#747474;transform:scaleX(0.9345);-webkit-text-stroke:0.1px;">ABI JARDIN</span>
<span class="t" style="left:323.40px;top:123px;font-size:11px;line-height:16px;color:#000;transform:scaleX(0.9599);-webkit-text-stroke:0.16px;">ABI 00007</span>
<span class="t" style="left:323.60px;top:221px;font-size:11px;line-height:16px;color:#000;transform:scaleX(0.8389);-webkit-text-stroke:0.16px;">CLICHY</span>
<span class="t" style="left:425.40px;top:221px;font-size:11px;line-height:16px;color:#000;transform:scaleX(0.8387);-webkit-text-stroke:0.16px;">ETS CLICHY</span>
<span class="t" style="left:323.60px;top:243px;font-size:11px;line-height:16px;color:#000;transform:scaleX(1.0192);-webkit-text-stroke:0.16px;">5 rue Olof Palme</span>
<span class="t" style="left:323.60px;top:287px;font-size:11px;line-height:16px;color:#000;transform:scaleX(0.9280);-webkit-text-stroke:0.16px;">BP 48</span>
<span class="t" style="left:323.60px;top:309px;font-size:11px;line-height:16px;color:#000;transform:scaleX(1.0015);-webkit-text-stroke:0.16px;">92110</span>
<span class="t" style="left:321.40px;top:353px;font-size:11px;line-height:16px;color:#000;transform:scaleX(0.9707);-webkit-text-stroke:0.16px;">29991611</span>
<span class="t" style="left:323.60px;top:400px;font-size:11px;line-height:16px;color:#000;transform:scaleX(0.8763);-webkit-text-stroke:0.16px;">EUR</span>
<span class="t" style="left:567.60px;top:309px;font-size:11px;line-height:16px;color:#000;transform:scaleX(0.8389);-webkit-text-stroke:0.16px;">CLICHY</span>
<span class="t" style="left:567.60px;top:353px;font-size:11px;line-height:16px;color:#000;transform:scaleX(0.8424);-webkit-text-stroke:0.16px;">FR</span>
<span class="t" style="left:567.60px;top:400px;font-size:11px;line-height:16px;color:#000;transform:scaleX(0.9798);-webkit-text-stroke:0.16px;">0.00000,0.00000</span>
<span class="t" style="left:323.60px;top:454px;font-size:11px;line-height:16px;color:#000;transform:scaleX(0.9161);-webkit-text-stroke:0.16px;">AFSCHRIFT Paul</span>
<span class="t" style="left:563.40px;top:454px;font-size:11px;line-height:16px;color:#747474;transform:scaleX(1.0505);-webkit-text-stroke:0.1px;">p.afschrift@picardsurgelsst.com</span>
</div></body></html>
